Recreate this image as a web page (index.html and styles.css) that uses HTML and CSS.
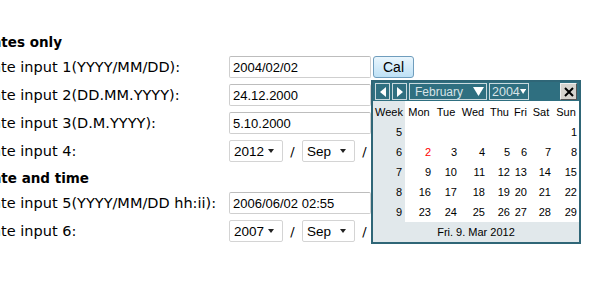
FILE: index.html
```html
<!DOCTYPE html>
<html lang="en">
<head>
  <meta charset="UTF-8" />
  <title>Calendar inputs</title>
  <link rel="stylesheet" href="styles.css">
</head>
<body>
  <div class="form">
    <h3>Dates only</h3>
    <div class="row">
      <label>Date input 1(YYYY/MM/DD):</label>
      <input type="text" value="2004/02/02" />
      <button class="cal-btn">Cal</button>
    </div>
    <div class="row">
      <label>Date input 2(DD.MM.YYYY):</label>
      <input type="text" value="24.12.2000" />
    </div>
    <div class="row">
      <label>Date input 3(D.M.YYYY):</label>
      <input type="text" value="5.10.2000" />
    </div>
    <div class="row">
      <label>Date input 4:</label>
      <span class="select year">2012<i class="caret"></i></span>
      <span class="sep">/</span>
      <span class="select month">Sep<i class="caret"></i></span>
      <span class="sep">/</span>
    </div>

    <h3>Date and time</h3>
    <div class="row">
      <label>Date input 5(YYYY/MM/DD hh:ii):</label>
      <input type="text" value="2006/06/02 02:55" />
    </div>
    <div class="row">
      <label>Date input 6:</label>
      <span class="select year">2007<i class="caret"></i></span>
      <span class="sep">/</span>
      <span class="select month">Sep<i class="caret"></i></span>
      <span class="sep">/</span>
    </div>
  </div>

  <!-- popup calendar -->
  <div class="calendar">
    <div class="cal-head">
      <span class="nav-btn">
        <svg width="8" height="10" viewBox="0 0 8 10"><polygon points="7,0 7,10 1,5" fill="#fff"/></svg>
      </span>
      <span class="nav-btn">
        <svg width="8" height="10" viewBox="0 0 8 10"><polygon points="1,0 1,10 7,5" fill="#fff"/></svg>
      </span>
      <span class="head-select month-sel">February
        <svg width="11" height="9" viewBox="0 0 11 9"><polygon points="0,0 11,0 5.5,9" fill="#fff"/></svg>
      </span>
      <span class="head-select year-sel">2004
        <svg width="11" height="9" viewBox="0 0 11 9"><polygon points="0,0 11,0 5.5,9" fill="#fff"/></svg>
      </span>
      <span class="close-btn">
        <svg width="10" height="10" viewBox="0 0 10 10"><path d="M1 1L9 9M9 1L1 9" stroke="#000" stroke-width="2"/></svg>
      </span>
    </div>
    <table class="days">
      <colgroup>
        <col class="c-week" />
        <col style="width:28px" />
        <col style="width:26px" />
        <col style="width:28px" />
        <col style="width:25px" />
        <col style="width:17px" />
        <col style="width:24px" />
        <col style="width:26px" />
      </colgroup>
      <thead>
        <tr>
          <th class="wk">Week</th><th>Mon</th><th>Tue</th><th>Wed</th><th>Thu</th><th>Fri</th><th>Sat</th><th>Sun</th>
        </tr>
      </thead>
      <tbody>
        <tr><td class="wk">5</td><td></td><td></td><td></td><td></td><td></td><td></td><td>1</td></tr>
        <tr><td class="wk">6</td><td class="today">2</td><td>3</td><td>4</td><td>5</td><td>6</td><td>7</td><td>8</td></tr>
        <tr><td class="wk">7</td><td>9</td><td>10</td><td>11</td><td>12</td><td>13</td><td>14</td><td>15</td></tr>
        <tr><td class="wk">8</td><td>16</td><td>17</td><td>18</td><td>19</td><td>20</td><td>21</td><td>22</td></tr>
        <tr><td class="wk">9</td><td>23</td><td>24</td><td>25</td><td>26</td><td>27</td><td>28</td><td>29</td></tr>
      </tbody>
    </table>
    <div class="cal-foot">Fri. 9. Mar 2012</div>
  </div>
</body>
</html>
```

FILE: styles.css
```css
body {
  margin: 0;
  background-color: #fff;
  font-family: "DejaVu Sans", Verdana, sans-serif;
  font-size: 14.5px;
  color: #000;
  overflow: hidden;
}
.form {
  margin-left: -19px;
  padding-top: 32px;
}
.form h3 {
  margin: 0 0 4px;
  font-size: 13.5px;
  line-height: 20px;
  font-weight: bold;
}
.row {
  display: flex;
  align-items: center;
  height: 22px;
  margin-bottom: 6px;
}
.row label {
  width: 248px;
  flex: none;
  white-space: nowrap;
}
.row input {
  box-sizing: border-box;
  width: 142px;
  height: 22px;
  margin: 0;
  padding: 0 3px;
  border: 1px solid #cfcfcf;
  border-top-color: #bdbdbd;
  border-radius: 2px;
  font-family: "Liberation Sans", Arial, sans-serif;
  font-size: 13px;
  color: #000;
}
.cal-btn {
  box-sizing: border-box;
  margin-left: 2px;
  width: 41px;
  height: 22px;
  padding: 0;
  border: 1px solid #6f9dbd;
  border-radius: 3px;
  background: linear-gradient(#eaf6fd, #bee1f6);
  font-family: "Liberation Sans", Arial, sans-serif;
  font-size: 14px;
  color: #000;
}
.select {
  box-sizing: border-box;
  display: flex;
  align-items: center;
  height: 22px;
  padding: 0 4px;
  border: 1px solid #d4d4d4;
  border-radius: 2px;
  font-family: "Liberation Sans", Arial, sans-serif;
  font-size: 13.5px;
}
.select.year {
  width: 54px;
}
.select.month {
  width: 53px;
}
.caret {
  margin-left: auto;
  margin-right: 4px;
  width: 0;
  height: 0;
  border-left: 3px solid transparent;
  border-right: 3px solid transparent;
  border-top: 4px solid #222;
}
.sep {
  width: 19px;
  text-align: center;
  font-size: 13px;
}

/* calendar popup */
.calendar {
  position: absolute;
  left: 371px;
  top: 80px;
  width: 206px;
  border: 2px solid #2f6677;
  background-color: #fff;
  font-family: "Liberation Sans", Arial, sans-serif;
  font-size: 11px;
}
.cal-head {
  display: flex;
  align-items: center;
  gap: 2px;
  height: 19px;
  padding: 0 2px;
  background-color: #2f6f80;
}
.nav-btn, .head-select, .close-btn {
  box-sizing: border-box;
  display: flex;
  align-items: center;
  height: 17px;
  border: 1px solid #c9d9de;
}
.nav-btn {
  width: 15px;
  justify-content: center;
}
.head-select {
  padding: 0 2px 0 5px;
  color: #d7e3e7;
  font-size: 12px;
  justify-content: space-between;
}
.month-sel {
  width: 78px;
}
.year-sel {
  width: 40px;
  padding-left: 2px;
  font-size: 12.5px;
}
.close-btn {
  margin-left: auto;
  width: 17px;
  justify-content: center;
  background-color: #d6d3ce;
  border-color: #f0f0f0 #555 #555 #f0f0f0;
}
.days {
  border-collapse: collapse;
  width: 100%;
  table-layout: fixed;
}
.c-week {
  width: 32px;
}
.days th {
  height: 21px;
  padding: 0;
  font-weight: normal;
  text-align: center;
}
.days td {
  height: 20px;
  padding: 0 2px 0 0;
  text-align: right;
}
.days .wk {
  background-color: #e1e8eb;
  padding-right: 3px;
}
.days th.wk {
  text-align: center;
  padding: 0;
}
.days .today {
  color: #f00;
}
.cal-foot {
  height: 20px;
  line-height: 20px;
  text-align: center;
  background-color: #e1e8eb;
}
```
